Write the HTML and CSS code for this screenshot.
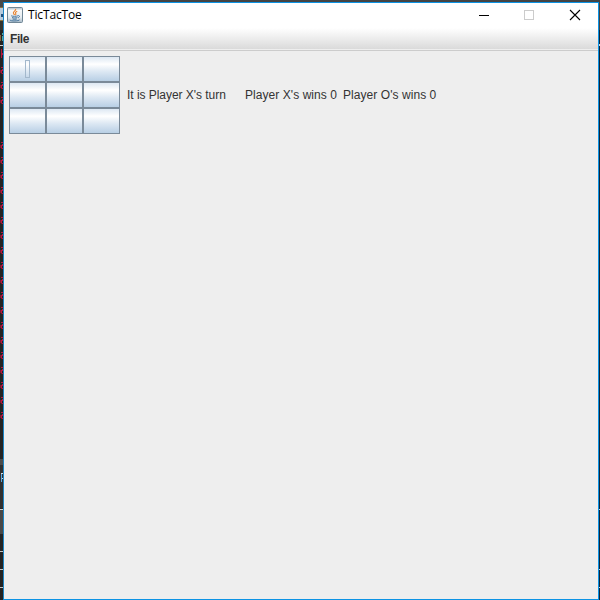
FILE: index.html
```html
<!DOCTYPE html>
<html lang="en">
<head>
<meta charset="utf-8">
<title>TicTacToe</title>
<link rel="stylesheet" href="styles.css">
</head>
<body>
<div class="backdrop">
  <svg class="sliver" width="3" height="600" viewBox="0 0 3 600" shape-rendering="crispEdges">
    <defs>
      <pattern id="trace" width="3" height="15" y="140" patternUnits="userSpaceOnUse">
        <path fill="#b5173d" d="M1 2h2v1H1zM2 4h1v1H2zM1 5h2v1H1zM1 6h1v2H1zM2 8h1v1H2z"/>
        <path fill="#7a1530" d="M0 5h1v3H0zM1 8h1v1H1z"/>
      </pattern>
    </defs>
    <path fill="#232323" d="M0 0h3v600H0z"/>
    <path fill="#484848" d="M0 0h3v7H0z"/>
    <path fill="#8a7440" d="M0 7h3v1H0zM0 20h3v1H0z"/>
    <path fill="#b8cbdc" d="M0 8h3v12H0z"/>
    <path fill="#24507c" d="M1 14h2v3H1z"/>
    <path fill="#36352e" d="M0 21h3v9H0z"/>
    <path fill="#4ba89c" d="M2 33h1v2H2zM2 36h1v5H2z"/>
    <path fill="#8a633c" d="M0 35h1v6H0z"/>
    <path fill="#d4d4d4" d="M0 45h3v1H0z"/>
    <path fill="#b5173d" d="M1 49h1v9H1zM2 53h1v2H2z"/>
    <path fill="url(#trace)" d="M0 65h3v40H0zM0 140h3v280H0z"/>
    <path fill="#4b4b4b" d="M0 459h3v6H0z"/>
    <path fill="#303030" d="M0 465h3v43H0z"/>
    <path fill="#d9d9d9" d="M1 473h2v1H1zM1 478h2v1H1z"/>
    <path fill="#5ba7e0" d="M1 474h1v8H1z"/>
    <path fill="#d0d0d0" d="M0 509h3v1H0z"/>
    <path fill="#484848" d="M0 510h3v24H0z"/>
    <path fill="#c4c4c4" d="M0 551h3v1H0zM0 569h3v1H0zM0 587h3v1H0z"/>
  </svg>
  <main class="window">
    <header class="titlebar">
      <svg class="app-icon" width="16" height="16" viewBox="0 0 16 16">
        <defs>
          <linearGradient id="tile" x1="0" y1="0" x2="0" y2="1">
            <stop offset="0" stop-color="#a9b9c4"/>
            <stop offset=".2" stop-color="#f7f9fa"/>
            <stop offset=".65" stop-color="#e5ebef"/>
            <stop offset="1" stop-color="#a8bac7"/>
          </linearGradient>
        </defs>
        <rect x=".5" y=".5" width="15" height="15" rx="1" fill="url(#tile)" stroke="#718796"/>
        <path d="M8.7 1.8c.5 2-2.6 2.5-2.3 4.2.1.8.9 1.2 1.1 2M10.2 4.2C8.8 5 7.8 5.6 8.8 6.7c.4.5 0 1-.4 1.4" fill="none" stroke="#e9822d" stroke-width="1.1"/>
        <path d="M4.2 8.8c1.5.7 5 .7 6.8 0M5 10.5c1.4.6 4 .6 5.4 0M5.6 12c1.2.4 3 .4 4.2 0M11.2 8.6c1.8-.3 1.7 1.6-.2 2.2M3 12.8c-.5 1.5 8.6 1.5 9.6 0" fill="none" stroke="#48779f"/>
      </svg>
      <h1 class="title">TicTacToe</h1>
      <svg class="controls" width="138" height="26" viewBox="0 0 138 26" shape-rendering="crispEdges">
        <path d="M19 12.500h10" stroke="#000"/>
        <path d="M64.500 7.500h9v9h-9z" fill="none" stroke="#ccc"/>
        <path d="M110 7l10 10M120 7l-10 10" stroke="#000" stroke-width="1.1" shape-rendering="auto"/>
      </svg>
    </header>
    <nav class="menubar"><span class="menu">File</span></nav>
    <section class="content">
      <div class="board">
        <button class="cell"><span class="focus"></span></button>
        <button class="cell"></button>
        <button class="cell"></button>
        <button class="cell"></button>
        <button class="cell"></button>
        <button class="cell"></button>
        <button class="cell"></button>
        <button class="cell"></button>
        <button class="cell"></button>
      </div>
      <span class="label turn">It is Player X's turn</span>
      <span class="label wins-x">Player X's wins 0</span>
      <span class="label wins-o">Player O's wins 0</span>
    </section>
  </main>
  <svg width="1" height="600" viewBox="0 0 1 600" shape-rendering="crispEdges">
    <path fill="#10263a" d="M0 0h1v600H0z"/>
    <path fill="#444" d="M0 0h1v30H0z"/>
    <path fill="#c4d4e0" d="M0 44h1v2H0zM0 509h1v1H0zM0 569h1v1H0zM0 587h1v1H0z"/>
  </svg>
</div>
</body>
</html>
```
FILE: styles.css
```css
* {
  box-sizing: border-box;
}

body {
  margin: 0;
  overflow: hidden;
}

.backdrop {
  display: flex;
  width: 600px;
  height: 600px;
  background: #444;
}

.backdrop > svg {
  flex: none;
  display: block;
}

.window {
  display: flex;
  flex-direction: column;
  width: 596px;
  height: 598px;
  margin-top: 2px;
  border: 1px solid #0c93e4;
  border-left-color: #1b84c4;
  background: #eee;
}

.titlebar {
  display: flex;
  height: 25px;
  padding-left: 3px;
  background: #fff;
}

.app-icon {
  margin-top: 4px;
}

.title {
  margin: 0 auto 0 5px;
  font: 400 12px/24px "Open Sans", "Noto Sans", sans-serif;
  letter-spacing: -0.15px;
  color: #000;
}

.menubar {
  height: 23px;
  padding-left: 6px;
  border-bottom: 1px solid #ccc;
  background: linear-gradient(#fff, #dadada 21px, #eee 21px);
}

.menu {
  display: block;
  padding-top: 1px;
  font: 700 12px/21px "Liberation Sans", Arial, sans-serif;
  letter-spacing: -0.4px;
  color: #333;
}

.content {
  display: flex;
  align-items: flex-start;
  padding: 5px;
}

.board {
  display: grid;
  grid-template-columns: repeat(3, 37px);
  grid-auto-rows: 26px;
}

.cell {
  display: flex;
  align-items: center;
  justify-content: center;
  padding: 0;
  border: 1px solid #7a8a99;
  border-radius: 0;
  background: linear-gradient(#dde8f3, #fff 30%, #dde8f3 60%, #b8cfe5);
}

.focus {
  width: 5px;
  height: 18px;
  border: 1px solid #a3b8cc;
}

.label {
  margin-top: 31px;
  font: 400 12px/16px "Liberation Sans", Arial, sans-serif;
  color: #333;
  white-space: pre;
}

.turn {
  width: 118px;
  margin-left: 7px;
  letter-spacing: -0.04px;
}

.wins-x {
  width: 98px;
  letter-spacing: 0.06px;
}

.wins-o {
  letter-spacing: 0.06px;
}
```
